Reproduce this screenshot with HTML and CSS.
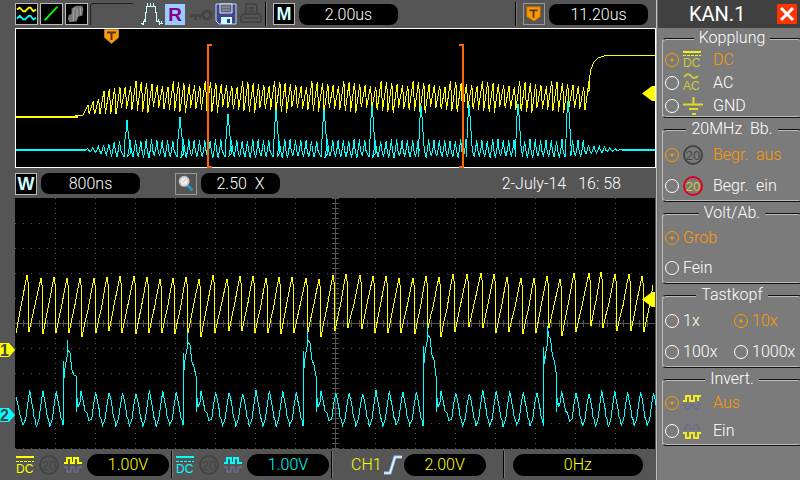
FILE: index.html
```html
<!DOCTYPE html>
<html lang="de">
<head>
<meta charset="utf-8">
<title>Oszilloskop</title>
<link rel="stylesheet" href="styles.css">
</head>

<body>
<div class="scope">
    <main class="display">
        <div class="bar topbar">
            <svg class="box" width="23" height="22" viewBox="0 0 23 22">
                <path d="M1 6l3-2 4 4h2l4-4h2l3 4 3-2" fill="none" stroke="#ff0" stroke-width="2"/>
                <path d="M1 16l3-3 4 4h2l4-4h2l3 4 3-2" fill="none" stroke="#0ff" stroke-width="2"/>
            </svg>
            <svg class="box" width="23" height="22" viewBox="0 0 23 22">
                <path d="M4 18L18 3" stroke="#0f0" stroke-width="2"/>
            </svg>
            <svg class="box" width="23" height="22" viewBox="0 0 23 22">
                <path d="M3 12l3-1V5l5-3h7l1 4-1 7-5 1-1 5-8 1-2-3z" fill="#777"/>
                <path d="M8 19V7l2-3M12 16V5M16 12V4" fill="none" stroke="#aaa"/>
            </svg>
            <span class="slot"></span>
            <svg class="pulse" width="22" height="22" viewBox="0 0 22 22">
                <path d="M0 20.500h2M2 18v4M2 18.500h3M4.500 19V9M5.500 10V3M5 3.500h10M14.500 3v7M15.500 9v10M15 18.500h4M18.500 18v4M18 20.500h4"/>
                <path d="M6.500 0v3M9.500 0v3M12.500 0v3M3.500 16v2M17.500 16v2M20.500 18v2M1.500 20v2"/>
            </svg>
            <span class="ref">R</span>
            <svg width="26" height="22" viewBox="0 0 26 22">
                <path d="M3 11h14v3h-3v2h-2v-2h-2v3H7v-3H3z" fill="#444"/>
                <circle cx="20" cy="12" r="4" fill="none" stroke="#444" stroke-width="3"/>
            </svg>
            <svg width="22" height="22" viewBox="0 0 22 22">
                <path d="M1 1h20v20H4l-3-3z" fill="#448" stroke="#bdf"/>
                <path d="M5 1h12v9H5z" fill="#667" stroke="#cef"/>
                <path d="M7 4h8M7 7h8" stroke="#99b"/>
                <path d="M6 14h11v7H6z" fill="#cff"/>
                <path d="M12 16h3v4h-3z" fill="#33a"/>
            </svg>
            <svg class="printer" width="22" height="22" viewBox="0 0 22 22">
                <path d="M6 11V1h9l2 2v8M9 5h5M9 8h5M3 11h16l2 3v5H1v-5zM4 15h14" fill="none" stroke="#444" stroke-width="2"/>
            </svg>
            <span class="sep"></span>
            <span class="letter">M</span>
            <span class="pill wide">2.00us</span>
            <span class="sep right"></span>
            <svg class="box plain" width="22" height="22" viewBox="0 0 22 22">
                <path d="M3 3h15v11l-7 5-8-5z" fill="#f90" stroke="#a60"/>
                <path d="M6 7h9M10.500 7v8" stroke="#532" stroke-width="2"/>
            </svg>
            <span class="pill wide">11.20us</span>
        </div>

        <svg class="overview" viewBox="0 0 656 141" preserveAspectRatio="none">
            <rect class="frame" x="15.500" y="0.500" width="640" height="139"/>
            <path class="flat ch1" d="M16 89h62"/>
            <path class="flat ch2" d="M16 122h70M622 122h33"/>
            <polyline class="trace ch1" id="over1"/>
            <polyline class="trace ch2" id="over2"/>
            <path class="window" d="M212 17h-4v122h4M459 17h4v122h-4"/>
            <path class="trigger" d="M104.500 1.500h14v8l-7 6-7-6z"/>
            <path class="trigger-t" d="M107 4.500h9M111.500 4v8"/>
            <path class="mark1" d="M655 58v15h-3l-10-7.500 10-7.500z"/>
        </svg>

        <div class="bar midbar">
            <span class="letter">W</span>
            <span class="pill wide">800ns</span>
            <svg class="box plain lens" width="22" height="22" viewBox="0 0 22 22">
                <path d="M13 13l5 5" stroke="#29d" stroke-width="3"/>
                <circle cx="9" cy="8" r="5" fill="#eee" stroke="#ccc" stroke-width="2"/>
                <path d="M7 9l4-3" stroke="#bbb"/>
            </svg>
            <span class="pill">2.50 &nbsp;X</span>
            <time class="date" datetime="2014-07-02T16:58"><span>2-July-14</span><span>16: 58</span></time>
        </div>

        <svg class="zoomed" viewBox="0 0 656 251" preserveAspectRatio="none">
            <rect x="15" y="0" width="640" height="251"/>
            <g id="grid"></g>
            <polyline class="trace ch1" id="main1"/>
            <polyline class="trace ch2" id="main2"/>
            <path class="mark1" d="M655 94v15h-3l-10-7.500 10-7.500z"/>
            <path class="mark1" d="M0 145h9l6 7-6 7H0z"/>
            <path class="mark2" d="M0 210h9l6 7-6 7H0z"/>
            <text class="marktext" x="0" y="158">1</text>
            <text class="marktext" x="0" y="223">2</text>
        </svg>

        <div class="bar bottombar">
            <div class="channel yellow">
                <svg width="18" height="22" viewBox="0 0 18 22">
                    <path d="M0 3h18" stroke="currentColor" stroke-width="2"/>
                    <path d="M0 7.500h18" stroke="currentColor" stroke-dasharray="3 1"/>
                    <text class="icontext" x="0" y="19">DC</text>
                </svg>
                <svg width="20" height="22" viewBox="0 0 20 22">
                    <circle cx="10" cy="11" r="9" fill="none" stroke="#444" stroke-width="2"/>
                    <text class="limit off" x="10" y="16">20</text>
                </svg>
                <svg width="18" height="22" viewBox="0 0 18 22">
                    <path d="M0 9h3V4h4v5h3V4h4v5h4" fill="none" stroke="currentColor" stroke-width="2"/>
                    <path d="M0 13h3v5h4v-5h3v5h4v-5h4" fill="none" stroke="#77a"/>
                </svg>
                <span class="pill round">1.00V</span>
            </div>
            <span class="sep"></span>
            <div class="channel cyan">
                <svg width="18" height="22" viewBox="0 0 18 22">
                    <path d="M0 3h18" stroke="currentColor" stroke-width="2"/>
                    <path d="M0 7.500h18" stroke="currentColor" stroke-dasharray="3 1"/>
                    <text class="icontext" x="0" y="19">DC</text>
                </svg>
                <svg width="20" height="22" viewBox="0 0 20 22">
                    <circle cx="10" cy="11" r="9" fill="none" stroke="#444" stroke-width="2"/>
                    <text class="limit off" x="10" y="16">20</text>
                </svg>
                <svg width="18" height="22" viewBox="0 0 18 22">
                    <path d="M0 9h3V4h4v5h3V4h4v5h4" fill="none" stroke="currentColor" stroke-width="2"/>
                    <path d="M0 13h3v5h4v-5h3v5h4v-5h4" fill="none" stroke="#77a"/>
                </svg>
                <span class="pill round">1.00V</span>
            </div>
            <span class="sep"></span>
            <div class="source yellow">
                <span>CH1</span>
                <svg width="18" height="20" viewBox="0 0 18 20">
                    <path d="M0 18h6l5-16h7" fill="none" stroke="#9cf" stroke-width="3"/>
                    <path d="M0 18h6l5-16h7" fill="none" stroke="#fff"/>
                </svg>
                <span class="pill round">2.00V</span>
            </div>
            <span class="sep"></span>
            <span class="pill round freq yellow">0Hz</span>
        </div>
    </main>

    <form class="menu">
        <header class="menu-head">
            <h1>KAN.1</h1>
            <button class="close" type="button" aria-label="Schließen">
                <svg width="20" height="20" viewBox="0 0 20 20"><path d="M4 4l12 12M16 4L4 16" stroke="#fff" stroke-width="3"/></svg>
            </button>
        </header>

        <fieldset class="group dense">
            <legend>Kopplung</legend>
            <label><input type="radio" name="kopplung" checked>
                <svg class="icon" width="20" height="20" viewBox="0 0 20 20">
                    <path d="M0 2h18" stroke="#ee2" stroke-width="2"/>
                    <path d="M0 5.500h18" stroke="#ee2" stroke-dasharray="3 1"/>
                    <text class="icontext" x="0" y="17">DC</text>
                </svg>
                <span>DC</span></label>
            <label><input type="radio" name="kopplung">
                <svg class="icon" width="20" height="20" viewBox="0 0 20 20">
                    <path d="M1 4q4-5 7-1t7 0" fill="none" stroke="#cc3" stroke-width="2"/>
                    <text class="icontext" x="0" y="17">AC</text>
                </svg>
                <span>AC</span></label>
            <label><input type="radio" name="kopplung">
                <svg class="icon" width="20" height="20" viewBox="0 0 20 20">
                    <path d="M10.500 1v7M0 8.500h20M6 13h9M9 18h4" stroke="#dd2" stroke-width="2"/>
                </svg>
                <span>GND</span></label>
        </fieldset>

        <fieldset class="group">
            <legend>20MHz &nbsp;Bb.</legend>
            <label><input type="radio" name="limit" checked>
                <svg class="icon" width="20" height="22" viewBox="0 0 20 22">
                    <circle cx="10" cy="11" r="9" fill="none" stroke="#444" stroke-width="2"/>
                    <text class="limit off" x="10" y="16">20</text>
                </svg>
                <span>Begr. &nbsp;aus</span></label>
            <label><input type="radio" name="limit">
                <svg class="icon" width="20" height="22" viewBox="0 0 20 22">
                    <circle cx="10" cy="11" r="9" fill="none" stroke="#d02" stroke-width="2"/>
                    <text class="limit" x="10" y="16">20</text>
                </svg>
                <span>Begr. &nbsp;ein</span></label>
        </fieldset>

        <fieldset class="group medium">
            <legend>Volt/Ab.</legend>
            <label><input type="radio" name="volt" checked><span>Grob</span></label>
            <label><input type="radio" name="volt"><span>Fein</span></label>
        </fieldset>

        <fieldset class="group probe">
            <legend>Tastkopf</legend>
            <label><input type="radio" name="probe"><span>1x</span></label>
            <label><input type="radio" name="probe" checked><span>10x</span></label>
            <label><input type="radio" name="probe"><span>100x</span></label>
            <label><input type="radio" name="probe"><span>1000x</span></label>
        </fieldset>

        <fieldset class="group low">
            <legend>Invert.</legend>
            <label><input type="radio" name="invert" checked>
                <svg class="icon" width="20" height="20" viewBox="0 0 20 20">
                    <path d="M0 8h3V3h4v5h4V3h4v5M15 3h3" fill="none" stroke="#ee2" stroke-width="2"/>
                    <path d="M0 12h3v4h4v-4h4v4h4v-4h3" fill="none" stroke="#669"/>
                </svg>
                <span>Aus</span></label>
            <label><input type="radio" name="invert">
                <svg class="icon" width="20" height="20" viewBox="0 0 20 20">
                    <path d="M0 8h3V4h4v4h4V4h4v4h3" fill="none" stroke="#669"/>
                    <path d="M0 12h3v5h4v-5h4v5h4v-5h3" fill="none" stroke="#ee2" stroke-width="2"/>
                </svg>
                <span>Ein</span></label>
        </fieldset>
    </form>
</div>
<script src="traces.js"></script>
</body>
</html>
```
FILE: styles.css
```css
* {
    box-sizing: border-box;
}
body {
    margin: 0;
    background-color: #555;
    color: white;
    font: 300 16px/20px Roboto, "Liberation Sans", sans-serif;
}
svg {
    display: block;
    flex: none;
}
.scope {
    display: grid;
    grid-template-columns: 1fr 144px;
    min-height: 100vh;
}
.display {
    display: flex;
    flex-direction: column;
    min-width: 0;
}

/* bars */
.bar {
    display: flex;
    align-items: center;
    flex: none;
    padding: 0 8px 0 15px;
}
.topbar {
    height: 28px;
    gap: 2px;
}
.midbar {
    height: 29px;
    gap: 4px;
}
.bottombar {
    height: 31px;
    padding: 0 13px;
}
.box {
    background-color: black;
    border: 1px solid #bbb;
}
.box.plain {
    background-color: #555;
    border-color: #999;
}
.slot {
    width: 43px;
    height: 22px;
    margin-right: 6px;
    border-top: 1px solid #222;
    border-left: 1px solid #222;
    border-radius: 4px 0 0 0;
}
.pulse {
    fill: none;
    stroke: #cff;
    shape-rendering: crispEdges;
}
.ref {
    width: 20px;
    height: 21px;
    background-color: #9cf;
    color: #808;
    font: bold 19px/21px "Liberation Sans", sans-serif;
    text-align: center;
}
.printer {
    margin: 0 1px;
}
.sep {
    flex: none;
    align-self: stretch;
    width: 2px;
    margin: 2px 0;
    border-left: 1px solid black;
    border-right: 1px solid #777;
}
.topbar .sep {
    margin-right: 4px;
}
.sep.right {
    margin-left: auto;
}
.letter {
    width: 22px;
    height: 22px;
    border: 1px solid #bbb;
    background-color: black;
    color: #cff;
    font: bold 18px/20px "Liberation Sans", sans-serif;
    text-align: center;
}
.topbar .letter, .topbar .plain {
    margin-right: 2px;
}
.pill {
    flex: none;
    width: 79px;
    height: 21px;
    border-radius: 8px;
    background-color: black;
    line-height: 21px;
    text-align: center;
}
.pill.wide {
    width: 99px;
}
.pill.round {
    width: 82px;
    height: 22px;
    border-radius: 11px;
    line-height: 22px;
}
.lens {
    margin-left: 31px;
}
.date {
    display: flex;
    gap: 12px;
    margin-left: auto;
    padding-right: 27px;
}
.channel {
    display: flex;
    gap: 5px;
    padding: 0 2px 0 3px;
}
.source {
    display: flex;
    align-items: center;
    gap: 2px;
    padding: 0 17px 0 18px;
}
.bottombar .freq {
    flex: 1;
    margin-left: 8px;
}
.yellow {
    color: #ff0;
}
.cyan {
    color: #0ff;
}

/* screens */
.overview {
    width: 100%;
    height: 0;
    flex: 141 0 0;
}
.zoomed {
    width: 100%;
    height: 0;
    flex: 251 0 0;
}
.frame {
    stroke: white;
}
.trace {
    fill: none;
    shape-rendering: crispEdges;
}
.flat {
    stroke-width: 2px;
    shape-rendering: crispEdges;
}
.ch1 {
    stroke: #ff0;
}
.ch2 {
    stroke: #0ff;
}
.window {
    fill: none;
    stroke: #f60;
    stroke-width: 2px;
}
.trigger {
    fill: #f90;
    stroke: #a75;
}
.trigger-t {
    stroke: #532;
    stroke-width: 2px;
}
.mark1 {
    fill: #ff0;
}
.mark2 {
    fill: #0ff;
}
.marktext {
    fill: #444;
    font: bold 16px "Liberation Sans", sans-serif;
}
.grid {
    stroke: #555;
    shape-rendering: crispEdges;
}

/* channel menu */
.menu {
    border-left: 2px ridge #c0c0c0;
    background-color: #7b7b7b;
    overflow: hidden;
}
.menu-head {
    display: flex;
    align-items: center;
    justify-content: space-between;
    height: 28px;
    margin-bottom: 1px;
    padding: 0 3px 0 31px;
    background-color: #404040;
}
.menu-head h1 {
    margin: 0;
    font-size: 20px;
    font-weight: 400;
}
.close {
    width: 20px;
    height: 20px;
    padding: 0;
    border: 0;
    background-color: #f30;
}
.group {
    min-width: 0;
    margin: 0 -2px 2px 4px;
    padding: 1px 2px 0;
    border: 1px solid #111;
    border-left-color: #bbb;
    border-radius: 4px;
    box-shadow: inset 0 1px #bbb, inset 0 -1px #bbb;
}
.group legend {
    margin: 0 auto;
    padding: 0 5px;
    background-color: #7b7b7b;
    line-height: 18px;
}
.group label {
    display: flex;
    align-items: center;
    height: 31px;
}
.dense label {
    height: 23px;
}
.medium label {
    height: 30px;
}
.low label {
    height: 28px;
}
.group input {
    appearance: none;
    flex: none;
    width: 14px;
    height: 14px;
    margin: 0 4px 0 0;
    border: 1px solid white;
    border-radius: 50%;
}
.group input:checked {
    border-color: #f90;
    background: radial-gradient(circle, #f90 1px, transparent 2px);
}
.group input:checked ~ span {
    color: #f90;
}
.icon {
    margin-right: 10px;
    color: #cc3;
}
.icontext {
    fill: currentColor;
    font: 12px "Liberation Sans", sans-serif;
}
.limit {
    fill: #cc3;
    font: 13px "Liberation Sans", sans-serif;
    text-anchor: middle;
}
.limit.off {
    fill: #444;
}
.probe {
    display: grid;
    grid-template-columns: 69px 1fr;
}
```
FILE: traces.js
```js
function jitter(i) {
    return ((i * 7919) % 13) / 6 - 1;      // repeatable -1..1
}

function draw(id, points) {
    document.getElementById(id).setAttribute("points",
        points.map(p => p[0].toFixed(1) + "," + p[1].toFixed(1)).join(" "));
}

function line(x1, y1, x2, y2, dash) {
    return '<line class="grid" x1="' + x1 + '" y1="' + y1 + '" x2="' + x2 + '" y2="' + y2 +
        '"' + (dash ? ' stroke-dasharray="' + dash + '"' : "") + '/>';
}

// graticule: 40 x 25 px divisions, dotted
function drawGrid() {
    var out = "";
    for (var x = 55.5; x < 655; x += 40)
        out += line(x, 0, x, 251, "1 4");
    for (var y = 25.5; y < 251; y += 25)
        out += line(15, y, 655, y, "1 7");
    out += line(15, 125.5, 655, 125.5) + line(335.5, 0, 335.5, 251);
    for (x = 23.5; x < 655; x += 8)
        out += line(x, 122, x, 129);
    for (y = 0.5; y < 251; y += 5)
        out += line(332, y, 339, y);
    document.getElementById("grid").innerHTML = out;
}

// ch 1 zoomed: [x, top] of each tooth, and the dip after it
const teeth = [[27,77],[41,80],[54,79],[67,80],[80,80],[94,80],[107,79],[120,78],[134,78],
    [147,79],[160,81],[173,80],[186,79],[199,81],[213,77],[227,81],[240,78],[253,78],[266,80],
    [279,79],[292,79],[306,80],[319,81],[333,77],[346,76],[360,77],[373,78],[386,78],[399,80],
    [413,80],[426,78],[439,79],[453,76],[467,76],[481,75],[494,76],[507,79],[521,80],[534,80],
    [547,78],[560,81],[574,75],[589,75],[601,74],[615,76],[629,76],[642,78]];
const dips = [134,136,135,135,139,135,133,135,136,135,135,136,135,139,135,133,133,135,135,136,
    135,134,139,133,130,131,135,135,135,136,130,139,134,129,130,135,134,136,135,130,138,134,
    128,130,133,133,134];

function mainSaw() {
    var pts = [[16, 135]];
    teeth.forEach(function (t, i) {
        var last = pts[pts.length - 1];
        var w = t[0] - last[0];
        var h = last[1] - t[1];
        pts.push([last[0] + w * 0.22, last[1] - h * 0.22]);
        pts.push([last[0] + w * 0.5, last[1] - h * 0.48 + jitter(i) * 2]);
        pts.push([last[0] + w * 0.8, last[1] - h * 0.8]);
        pts.push([t[0], t[1]]);
        pts.push([t[0] + 1, t[1] + 7]);
        pts.push([t[0] + 1, dips[i] - 9]);
        pts.push([t[0] + 2, dips[i]]);
    });
    pts.push([649, 110], [653, 87]);
    draw("main1", pts);
}

// ch 2 zoomed: every ninth ripple is a spike
const spikes = { 63: 142, 183: 134, 303: 132, 423: 127, 543.5: 128 };

function mainRipple() {
    var pts = [[16, 199], [18, 207], [20, 217], [23, 227]];
    var x = 23;
    var n = 0;
    var starts = Object.keys(spikes).map(Number).sort((a, b) => a - b);
    starts.push(660);
    starts.forEach(function (start) {
        var count = Math.round((start - x) / 13.3);
        var w = (start - x) / count;
        for (var i = 0; i < count && x < 652; i++) {
            var top = 194 + jitter(n) * 2;
            pts.push([x + w * 0.2, 221], [x + w * 0.35, 206], [x + w * 0.5, top],
                [x + w * 0.62, 202 + jitter(n + 3)], [x + w * 0.75, 211],
                [x + w * 0.82, 219], [x + w * 0.93, 222], [x + w, 228 + jitter(n + 5)]);
            x += w;
            n++;
        }
        if (start < 655) {
            var p = spikes[start];
            pts.push([start, 225], [start, p + 21], [start + 1, p + 38], [start + 2, p + 28],
                [start + 4, p + 17], [start + 4, p], [start + 5, p + 10], [start + 7, p + 13],
                [start + 9, p + 30], [start + 11, p + 35], [start + 13, 178],
                [start + 13, 214], [start + 14, 200], [start + 15, 209], [start + 17, 204],
                [start + 18, 193], [start + 20, 202], [start + 22, 213], [start + 24, 215],
                [start + 26, 223]);
            x = start + 26;
        }
    });
    draw("main2", pts);
}

// whole record, ch 1: flat, burst, then up to the high level
function overSaw() {
    var pts = [[16, 89], [40, 89], [75, 88], [83, 87]];
    var i = 0;
    for (var x = 84; x < 586; x += 5.33, i++) {
        var k = Math.min(1, (x - 80) / 45);
        var low = 89 - 7 * k + jitter(i) * 3;
        var high = 84 - 28 * Math.sqrt(k) + jitter(i + 4) * 3;
        pts.push([x, low], [x + 2, (low + high) / 2], [x + 4, high], [x + 4.6, high + 8]);
    }
    pts.push([587, 66], [589, 54], [591, 41], [594, 34], [598, 30], [604, 28], [612, 27.5],
        [626, 27], [640, 28], [648, 27], [655, 27]);
    draw("over1", pts);
}

const overSpikes = [[127,92],[180,89],[228,86],[276,82],[324,82],[372,78],[421,78],[469,77],
    [518,76],[568,73]];

function overRipple() {
    var pts = [[16, 122], [84, 122]];
    var i = 0;
    for (var x = 85; x < 625; x += 5.33, i++) {
        var k = x < 586 ? Math.min(1, (x - 78) / 45) : Math.max(0, (625 - x) / 75);
        var s = overSpikes.find(s => s[0] >= x && s[0] < x + 5.33);
        if (s)
            pts.push([s[0] - 3, 129], [s[0] - 2, 111], [s[0] - 1, s[1] + 12], [s[0], s[1]],
                [s[0] + 1, s[1] + 11], [s[0] + 3, 118], [s[0] + 4, 125]);
        else
            pts.push([x, 122 + 7 * k + jitter(i) * k], [x + 1.6, 122 - 2 * k],
                [x + 2.6, 122 - 10 * k + jitter(i + 2) * k], [x + 3.6, 122]);
    }
    pts.push([625, 122], [655, 122]);
    draw("over2", pts);
}

drawGrid();
mainSaw();
mainRipple();
overSaw();
overRipple();
```
